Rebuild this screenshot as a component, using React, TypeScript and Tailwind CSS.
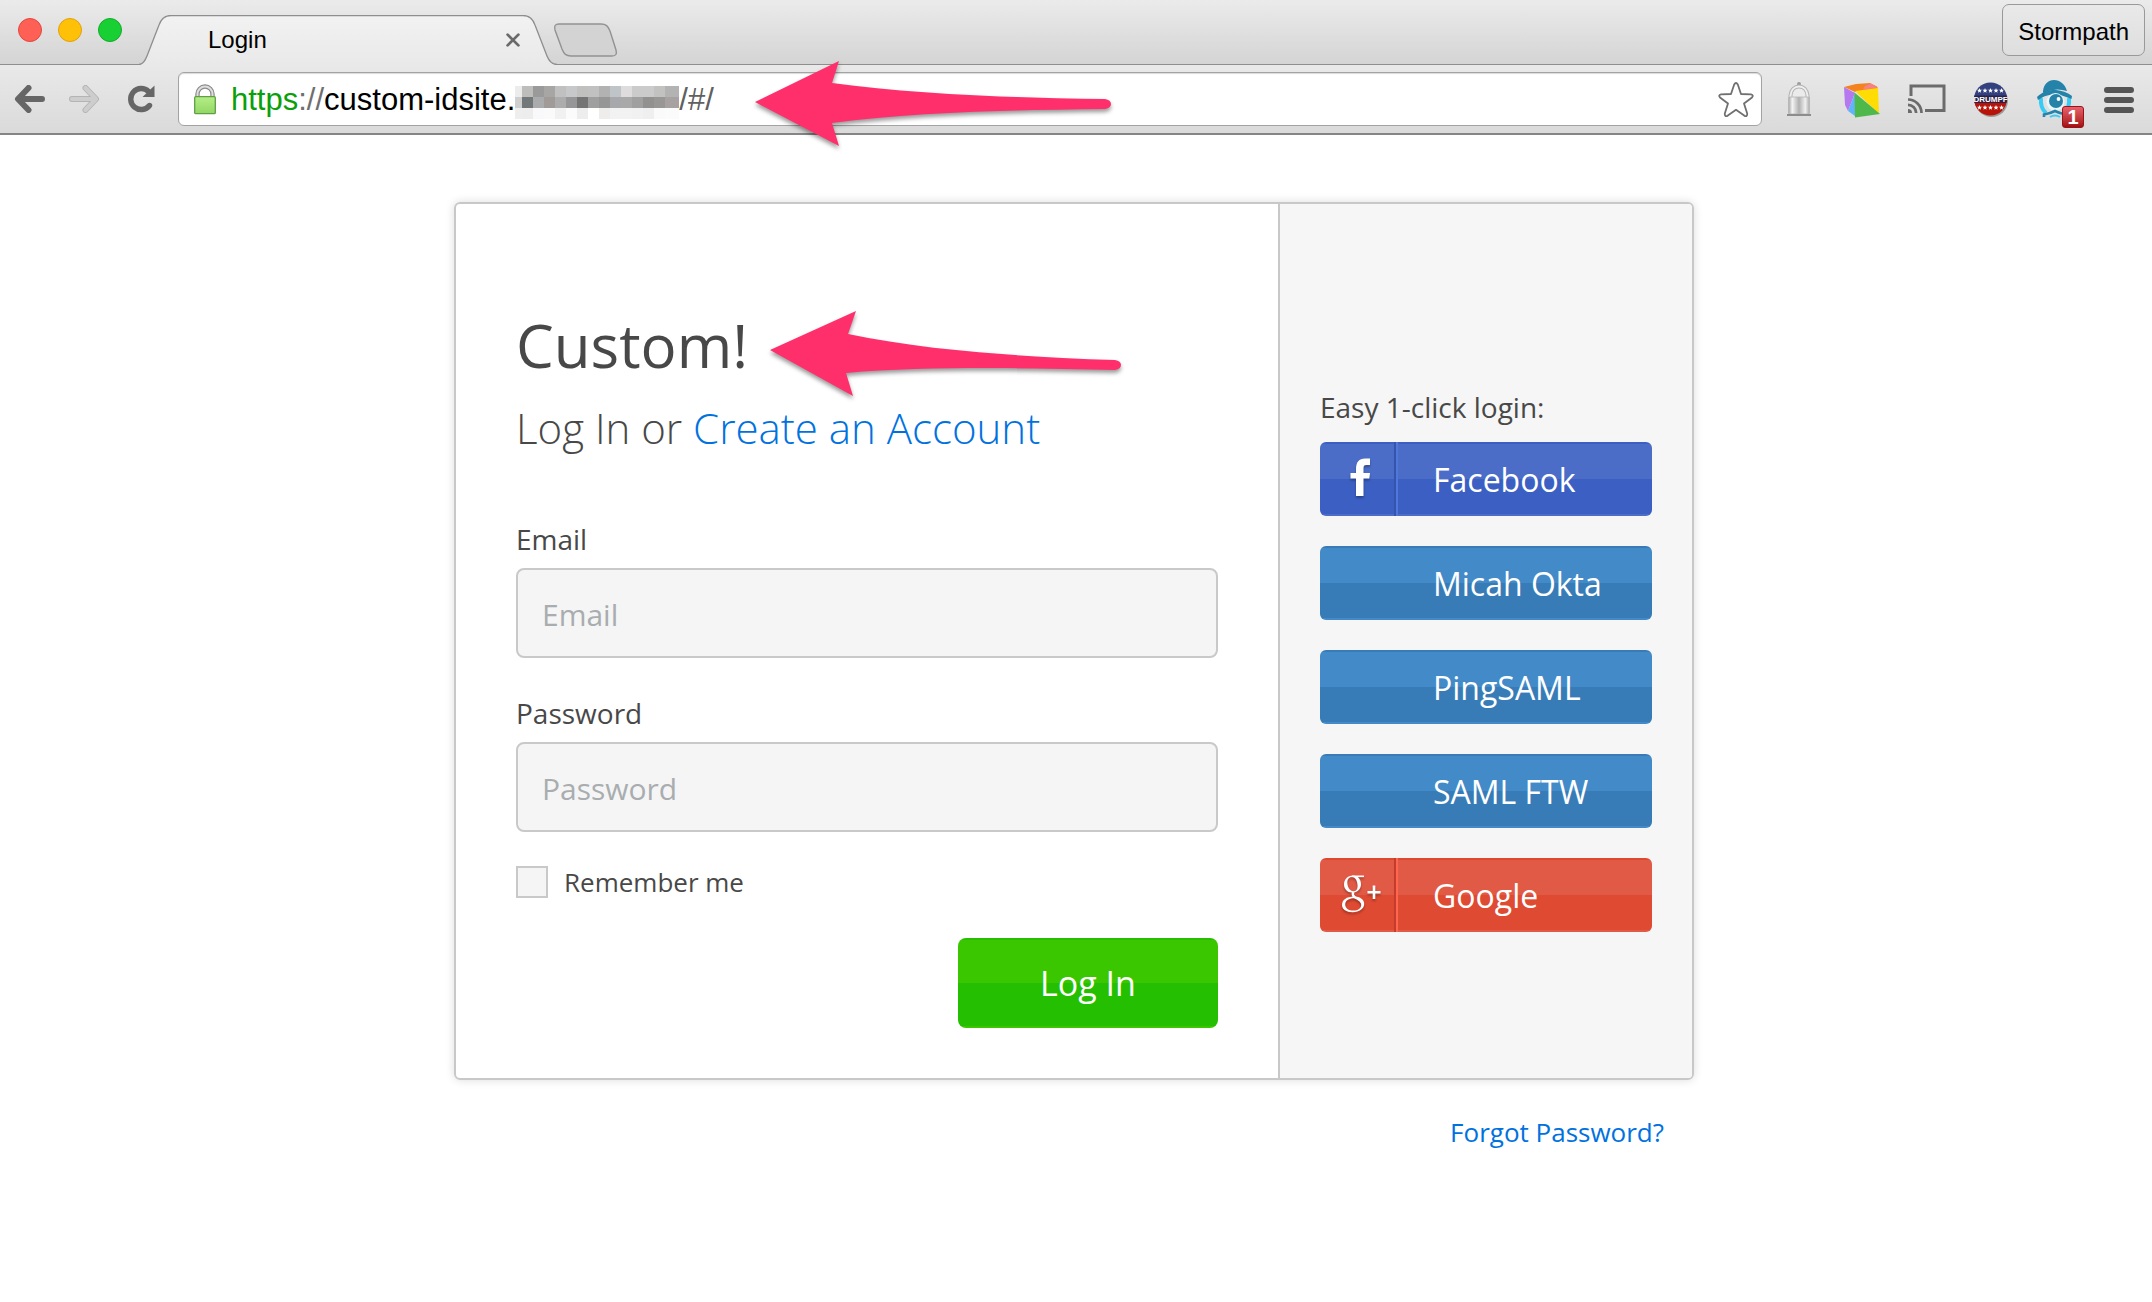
import React from "react";

const MOSAIC: string[][] = [
  ["#ececec", "#bdbdbb", "#999a99", "#a7a6a4", "#c0c0c0", "#c6c8ca", "#c0c0bf", "#c1c1c1", "#b2b2b3", "#bfc4c9", "#dedcdd", "#cbcbcb", "#cbcbcb", "#c2c2c1", "#b3b3b3"],
  ["#cfcfcf", "#727879", "#a9abad", "#a09b99", "#acacad", "#969598", "#747474", "#9f9f9f", "#969696", "#a6a8ac", "#a9a9aa", "#a0a0a1", "#929190", "#999796", "#a7a2a1"],
  ["#eeeeee", "#ededed", "#f9f9fb", "#fafafa", "#f1f1f1", "#fbfbfb", "#ededed", "#ffffff", "#efedeb", "#f2f2f2", "#f2f2f2", "#f1f1f1", "#efefef", "#fafafa", "#fbfbfb"],
];

function Mosaic() {
  return (
    <svg width="164" height="33" viewBox="0 0 164 33" shapeRendering="crispEdges" aria-hidden="true" className="shrink-0">
      {MOSAIC.map((row, r) =>
        row.map((c, i) => (
          <rect key={`${r}-${i}`} x={i === 0 ? 0 : 7 + (i - 1) * 11} y={r * 11} width={i === 0 ? 7 : i === 14 ? 14 : 11} height="11" fill={c} />
        )),
      )}
    </svg>
  );
}

function BrowserTab() {
  return (
    <div className="relative z-10 -mb-px ml-[17px] flex h-[50px] w-[418px] shrink-0 items-center">
      <svg className="absolute inset-0" width="418" height="50" viewBox="0 0 418 50" aria-hidden="true">
        <defs>
          <linearGradient id="tabFill" x1="0" y1="0" x2="0" y2="1">
            <stop offset="0" stopColor="#f2f2f2" />
            <stop offset="1" stopColor="#e9e9e9" />
          </linearGradient>
        </defs>
        <path d="M0 50V49.5C4 49.5 6 46 8 41L20 10C22 4 25 .5 32 .5H384C391 .5 394 4 396 10L408 41C410 46 413 49.500 418 49.500V50Z" fill="url(#tabFill)" />
        <path d="M0 49.500C4 49.500 6 46 8 41L20 10C22 4 25 .5 32 .5H384C391 .5 394 4 396 10L408 41C410 46 413 49.500 418 49.500" fill="none" stroke="#8e8e8e" strokeWidth="1.300" />
      </svg>
      <span className="relative flex-1 pl-[69px] text-[24px] leading-[28px] text-black">Login</span>
      <button type="button" aria-label="Close tab" className="relative mr-[37px] flex h-6 w-[14px] items-center justify-center">
        <svg width="14" height="14" viewBox="0 0 13 13" fill="none" stroke="#6a6a6a" strokeWidth="2.600" strokeLinecap="round">
          <path d="M1.500 1.500l10 10M11.500 1.500l-10 10" />
        </svg>
      </button>
    </div>
  );
}

function LockIcon() {
  return (
    <svg width="24" height="32" viewBox="0 0 24 32" aria-hidden="true" className="shrink-0">
      <defs>
        <linearGradient id="lockBody" x1="0" y1="0" x2="0" y2="1">
          <stop offset="0" stopColor="#b5ee86" />
          <stop offset="1" stopColor="#92d765" />
        </linearGradient>
      </defs>
      <path d="M4.500 13V10a7.500 7.500 0 0 1 15 0v3" fill="none" stroke="#8b8b8b" strokeWidth="4.400" />
      <path d="M4.500 13V10a7.500 7.500 0 0 1 15 0v3" fill="none" stroke="#dedede" strokeWidth="2" />
      <rect x="1.700" y="12.700" width="20.600" height="17" rx="1" fill="url(#lockBody)" stroke="#5f9f45" strokeWidth="1.300" />
    </svg>
  );
}

function BackIcon() {
  return (
    <svg width="32" height="28" viewBox="0 0 32 28" fill="none" stroke="#666666" strokeWidth="6" strokeLinecap="round" strokeLinejoin="round">
      <path d="M28 14H5M14.500 3L4 14l10.500 11" />
    </svg>
  );
}

function ForwardIcon() {
  return (
    <svg width="32" height="28" viewBox="0 0 32 28" fill="none" strokeLinecap="round" strokeLinejoin="round">
      <path d="M4 14h23M17.500 3L28 14 17.500 25" stroke="#b4b4b4" strokeWidth="6" />
      <path d="M4 14h23M17.500 3L28 14 17.500 25" stroke="#cdcdcd" strokeWidth="4.200" />
    </svg>
  );
}

function ReloadIcon() {
  return (
    <svg width="28" height="28" viewBox="0 0 28 28" aria-hidden="true">
      <path d="M21.500 6.500A10.500 10.500 0 1 0 22.500 20.500" fill="none" stroke="#666666" strokeWidth="5.400" strokeLinecap="round" />
      <path d="M27.500 .5V12H15.500Z" fill="#666666" />
    </svg>
  );
}

function GhostLockIcon() {
  return (
    <svg width="28" height="36" viewBox="0 0 28 36" aria-hidden="true">
      <defs>
        <linearGradient id="ghost" x1="0" y1="0" x2="1" y2="0">
          <stop offset="0" stopColor="#a4a4a4" />
          <stop offset=".18" stopColor="#f4f4f4" />
          <stop offset=".5" stopColor="#b0b0b0" />
          <stop offset=".8" stopColor="#f0f0f0" />
          <stop offset="1" stopColor="#ababab" />
        </linearGradient>
      </defs>
      <circle cx="14" cy="3" r="2" fill="#9c9c9c" />
      <path d="M5.500 17V14.500C6 9 9.500 5.500 14 5.500S22 9 22.500 14.500V17" fill="#ebebeb" stroke="#b4b4b4" strokeWidth="4" />
      <path d="M5.500 17V14.500C6 9 9.500 5.500 14 5.500S22 9 22.500 14.500V17" fill="none" stroke="#efefef" strokeWidth="2" />
      <rect x="3.500" y="16" width="21" height="17" rx="1" fill="url(#ghost)" stroke="#b5b5b5" strokeWidth=".8" />
      <path d="M2 34h24" stroke="#8d8d8d" strokeWidth="2" />
    </svg>
  );
}

function CubeIcon() {
  return (
    <svg width="38" height="36" viewBox="0 0 38 36" aria-hidden="true">
      <path d="M1 4L13 1 27 0 34 3.500 35 6 12 9Z" fill="#f58220" />
      <path d="M22 3L28 .5 35 5 20 6.500Z" fill="#f7818a" />
      <path d="M1 4L12 10 5 28 2 22Z" fill="#b678ee" />
      <path d="M12 10L5 28 12 33Z" fill="#62b4fa" />
      <path d="M12 8L35 5 36 31Z" fill="#ffdc04" />
      <path d="M11.500 9.500L37 31 12 34.500Z" fill="#4fb84a" />
    </svg>
  );
}

function CastIcon() {
  return (
    <svg width="40" height="32" viewBox="0 0 40 32" fill="none" stroke="#6b6b6b" aria-hidden="true">
      <path d="M4 13V3H37V27.500H18" strokeWidth="3" />
      <path d="M1 16.500A13.500 13.500 0 0 1 14.500 30M1 21.800A8.200 8.200 0 0 1 9.200 30" strokeWidth="2.700" />
      <path d="M1 30V26A4 4 0 0 1 5 30Z" fill="#6b6b6b" stroke="none" />
    </svg>
  );
}

const STARS = [6, 11.5, 17, 22.5, 28];

function BadgeIcon() {
  return (
    <svg width="36" height="38" viewBox="0 0 36 38" aria-hidden="true">
      <defs>
        <clipPath id="round">
          <circle cx="17.500" cy="18" r="16.500" />
        </clipPath>
      </defs>
      <circle cx="18.500" cy="19.500" r="16.500" fill="#000" opacity=".3" />
      <g clipPath="url(#round)">
        <rect width="36" height="18" fill="#32407f" />
        <rect y="18" width="36" height="20" fill="#b81308" />
        <rect y="14.500" width="36" height="7.500" fill="#2b2347" />
      </g>
      {STARS.map((x) => (
        <g key={x} fill="#fff">
          <path d={`M${x + 0.5} 7l.7 1.700 1.800.1-1.400 1.200.5 1.800-1.600-1-1.600 1 .5-1.800-1.400-1.200 1.800-.1z`} />
          <path d={`M${x + 0.5} 24l.7 1.700 1.800.1-1.400 1.200.5 1.800-1.600-1-1.600 1 .5-1.800-1.400-1.200 1.800-.1z`} />
        </g>
      ))}
      <text x="17.500" y="21" textAnchor="middle" fontFamily="Liberation Sans, sans-serif" fontWeight="700" fontSize="8" fill="#fff">
        DRUMPF
      </text>
    </svg>
  );
}

function DetectiveIcon() {
  return (
    <svg width="38" height="40" viewBox="0 0 38 40" aria-hidden="true">
      <path d="M5 19Q4 29 10 34M33 19Q34 29 28 34" fill="none" stroke="#38ccf5" strokeWidth="4" />
      <path d="M7 12C8 5 12 1 18 1S29 5 31 12Q19 8 7 14Z" fill="#2583a9" />
      <path d="M1 18C7 12 14 10.500 20 11S32 14 36 17L35.500 20C30 18 24 15 17 15.500S7 18 2 21Z" fill="#2583a9" />
      <circle cx="19.500" cy="23" r="9" fill="#e9f6fa" />
      <circle cx="20" cy="22" r="7" fill="#2583a9" />
      <circle cx="22.500" cy="20" r="1.900" fill="#fff" />
      <path d="M8 38V35.500Q14 34.500 19 32 24 34.500 30 35.500V38" fill="none" stroke="#2583a9" strokeWidth="2.600" />
      <path d="M14 38q5-3 10 0" fill="none" stroke="#38ccf5" strokeWidth="2" />
    </svg>
  );
}

function FacebookIcon() {
  return (
    <svg width="24" height="42" viewBox="0 0 24 42" aria-hidden="true" className="drop-shadow-[0_2px_1px_rgba(0,0,0,0.3)]">
      <path d="M7 39V21.500H1.500V16H7V12C7 5 10 1.500 16 1.500H21V8H17.500C15 8 14.500 9 14.500 11.500V16H21L20.300 21.500H14.500V39Z" fill="#fff" />
    </svg>
  );
}

function GooglePlusIcon() {
  return (
    <svg width="42" height="40" viewBox="0 0 42 40" fill="none" stroke="#fff" aria-hidden="true" className="drop-shadow-[0_2px_1px_rgba(0,0,0,0.3)]">
      <path
        fillRule="evenodd"
        stroke="none"
        fill="#fff"
        d="M13 1.500C7.500 1.500 4 5.500 4 10.500 4 15 7.500 18.500 12 18.500 17.500 18.500 21 15 21 10.200 21 5.500 18 1.500 13 1.500ZM12.200 3C15.500 3 17.600 7.500 17.600 12 17.600 15.500 16 17.200 13.400 17.200 9.500 17.200 7.300 12.500 7.300 8.300 7.300 5 9 3 12.200 3Z"
      />
      <path d="M12 2.300H24" strokeWidth="1.600" />
      <path d="M13.500 18Q11.500 21 15 23.200 20.500 26 21.800 28" strokeWidth="2.400" />
      <path
        fillRule="evenodd"
        stroke="none"
        fill="#fff"
        d="M14 22.500C6.500 22.500 2 26 2 31 2 35.500 6.500 38.200 12.500 38.200 19.500 38.200 24.200 34.800 24.200 29.800 24.200 26 20.500 22.500 14 22.500ZM14.500 24.200C18.500 25.500 21.200 28 21.200 31 21.200 34.500 18 36.600 13.500 36.600 8.500 36.600 5.200 34.200 5.200 30.500 5.200 26.500 9 24 14.500 24.200Z"
      />
      <path d="M34 11.500V25M27.500 18.200H40.500" strokeWidth="2.600" />
    </svg>
  );
}

type Provider = { name: string; tone: string; icon?: React.ReactNode; iconTone?: string };

const BLUE =
  "bg-[linear-gradient(to_bottom,#387bb6_0_2px,#428ac8_2px_37px,#387cb7_37px_72px,#428ac8_72px)]";

const PROVIDERS: Provider[] = [
  {
    name: "Facebook",
    tone: "bg-[linear-gradient(to_bottom,#3b5fc2_0_2px,#4b6dc7_2px_37px,#3b5fc3_37px_72px,#4b6dc7_72px)]",
    icon: <FacebookIcon />,
    iconTone: "border-[#3554ae] shadow-[2px_0_0_#5078dc]",
  },
  { name: "Micah Okta", tone: BLUE },
  { name: "PingSAML", tone: BLUE },
  { name: "SAML FTW", tone: BLUE },
  {
    name: "Google",
    tone: "bg-[linear-gradient(to_bottom,#de4830_0_2px,#e15a46_2px_37px,#df4a32_37px_72px,#e15a46_72px)]",
    icon: <GooglePlusIcon />,
    iconTone: "border-[#c43c2b] shadow-[2px_0_0_#ff6650]",
  },
];

function ProviderButton({ name, tone, icon, iconTone }: Provider) {
  return (
    <button type="button" className={`flex h-[74px] w-full items-center rounded-[6px] text-left text-[32px] text-white ${tone}`}>
      {icon ? (
        <span className={`flex h-full w-[76px] items-center justify-center border-r-2 pb-[2px] pl-[8px] ${iconTone}`}>{icon}</span>
      ) : (
        <span className="w-[76px]" />
      )}
      <span className="pt-[2px] pl-[37px] leading-[44px]">{name}</span>
    </button>
  );
}

function Field({ id, label, type }: { id: string; label: string; type: string }) {
  return (
    <div className="flex flex-col gap-[9px]">
      <label htmlFor={id} className="text-[28px] leading-[40px]">
        {label}
      </label>
      <input
        id={id}
        type={type}
        placeholder={label}
        className="h-[90px] w-full rounded-[8px] border-2 border-[#c9c9c9] bg-[#f5f5f5] px-6 pt-[3px] text-[30px] outline-none placeholder:text-[#a9adb0]"
      />
    </div>
  );
}

function Arrow({ className, d }: { className: string; d: string }) {
  return (
    <svg
      width="360"
      height="92"
      viewBox="0 0 360 92"
      aria-hidden="true"
      className={`pointer-events-none absolute z-20 drop-shadow-[0_3px_2px_rgba(0,0,0,0.4)] ${className}`}
    >
      <path d={d} fill="#ff2f6c" />
    </svg>
  );
}

function BrowserChrome() {
  return (
    <header className="border-b-2 border-[#858585] font-['Liberation_Sans',Arial,sans-serif]">
      <div className="flex h-[65px] items-end border-b border-[#8e8e8e] bg-linear-to-b from-[#ebebeb] to-[#d4d4d4]">
        <div className="flex gap-4 self-start pt-[18px] pl-[18px]">
          <button type="button" aria-label="Close window" className="size-6 rounded-full border border-[#e2463f] bg-[#ff6056]" />
          <button type="button" aria-label="Minimize window" className="size-6 rounded-full border border-[#e0a10e] bg-[#ffc008]" />
          <button type="button" aria-label="Zoom window" className="size-6 rounded-full border border-[#12ac28] bg-[#18d034]" />
        </div>
        <BrowserTab />
        <button type="button" aria-label="New tab" className="-ml-[4px] mb-[7px]">
          <svg width="65" height="34" viewBox="0 0 65 34">
            <path d="M6 1H48C53 1 55 3 57 8L63 27C64 31 63 33 59 33H18C13 33 11 31 9 26L2 7C1 3 2 1 6 1Z" fill="#d3d3d3" stroke="#929292" strokeWidth="1.400" />
          </svg>
        </button>
        <button
          type="button"
          className="mr-[7px] mb-[8px] ml-auto h-[52px] rounded-[7px] border border-[#999999] bg-linear-to-b from-[#e9e9e9] to-[#dedede] px-[15px] pt-[3px] text-[24px] text-black"
        >
          Stormpath
        </button>
      </div>
      <div className="flex h-[68px] items-center bg-linear-to-b from-[#e9e9e9] to-[#dadada] pl-[14px]">
        <button type="button" aria-label="Back">
          <BackIcon />
        </button>
        <button type="button" aria-label="Forward" className="ml-[22px]">
          <ForwardIcon />
        </button>
        <button type="button" aria-label="Reload" className="ml-[27px]">
          <ReloadIcon />
        </button>
        <div className="ml-[23px] flex h-[54px] flex-1 items-center rounded-[6px] border border-[#a3a3a3] bg-white pt-px pr-[6px] pl-[14px] text-[31px] leading-[36px] shadow-[inset_0_1px_1px_rgba(0,0,0,0.15)]">
          <LockIcon />
          <span className="ml-[14px] whitespace-nowrap text-black">
            <span className="text-[#0aa00a]">https</span>
            <span className="text-[#6f6f6f]">://</span>custom-idsite.
          </span>
          <div className="pt-[6px]">
            <Mosaic />
          </div>
          <span className="text-[#606060]">/#/</span>
          <button type="button" aria-label="Bookmark this page" className="ml-auto">
            <svg width="38" height="38" viewBox="0 0 38 38" fill="none" stroke="#707070" strokeWidth="1.800" strokeLinejoin="round">
              <path d="M17.200 3.500Q19 .5 20.800 3.500L24 13 34 13.300Q37 14 35 16.500L27 22.500 30.200 32.500Q30.500 35.800 27.500 34.800L19 28.800 10.500 34.800Q7.500 35.800 7.800 32.500L11 22.500 3 16.500Q1 14 4 13.300L14 13Z" />
            </svg>
          </button>
        </div>
        <div className="flex items-center pr-[18px] pl-[23px]">
          <button type="button" aria-label="Lock extension">
            <GhostLockIcon />
          </button>
          <button type="button" aria-label="Cube extension" className="ml-[30px] pt-[3px]">
            <CubeIcon />
          </button>
          <button type="button" aria-label="Cast" className="ml-[26px]">
            <CastIcon />
          </button>
          <button type="button" aria-label="Drumpf extension" className="ml-[26px] pt-[2px]">
            <BadgeIcon />
          </button>
          <button type="button" aria-label="Privacy extension" className="relative ml-[27px]">
            <DetectiveIcon />
            <span className="absolute -right-[10px] -bottom-[9px] flex h-[22px] w-[22px] items-center justify-center rounded-[3px] border border-[#96141a] bg-linear-to-b from-[#e8606a] to-[#a50c12] text-[20px] leading-[20px] font-bold text-white">
              1
            </span>
          </button>
          <button type="button" aria-label="Menu" className="ml-[30px] pt-px">
            <svg width="30" height="26" viewBox="0 0 30 26" stroke="#555555" strokeWidth="6" strokeLinecap="round">
              <path d="M3 3H27M3 13H27M3 23H27" />
            </svg>
          </button>
        </div>
      </div>
    </header>
  );
}

export default function App() {
  return (
    <div className="relative min-h-screen bg-white font-['Open_Sans',sans-serif] text-[#484848]">
      <BrowserChrome />
      <main className="pt-[67px] pr-1 pb-16">
        <div className="mx-auto w-full max-w-[1240px]">
          <div className="flex rounded-[6px] border-2 border-[#c8c8c8] shadow-[0_0_10px_rgba(0,0,0,0.14)]">
            <form className="flex-1 px-[60px] pt-[101px] pb-[50px]" onSubmit={(e) => e.preventDefault()}>
              <div className="relative">
                <h1 className="text-[60px] leading-[80px]">Custom!</h1>
                <Arrow
                  className="top-0 left-[252px]"
                  d="M2 45L88 6 80 29C160 46 260 52 347 55Q353 56 353 60T347 65C260 63 160 61 78 68L85 91Z"
                />
              </div>
              <p className="mt-[15px] text-[42px] leading-[56px] font-light">
                Log In or{" "}
                <a href="#register" className="text-[#0072e0]">
                  Create an Account
                </a>
              </p>
              <div className="mt-[63px] flex flex-col gap-[35px]">
                <Field id="email" label="Email" type="email" />
                <Field id="password" label="Password" type="password" />
              </div>
              <div className="mt-[34px] flex items-center gap-4">
                <input id="remember" type="checkbox" className="size-8 appearance-none border-2 border-[#c9c9c9] bg-[#f5f5f5] checked:bg-[#c9c9c9]" />
                <label htmlFor="remember" className="text-[26px] leading-[32px]">
                  Remember me
                </label>
              </div>
              <button
                type="submit"
                className="mt-[40px] ml-auto block h-[90px] w-[260px] rounded-[8px] bg-[linear-gradient(to_bottom,#26bf00_0_2px,#3bc700_2px_45px,#24bf00_45px_88px,#3bc700_88px)] text-[34px] text-white"
              >
                Log In
              </button>
            </form>
            <aside className="w-[414px] rounded-r-[4px] border-l-2 border-[#c8c8c8] bg-[#f6f6f6] px-[40px] pt-[183px]">
              <p className="text-[28px] leading-[40px]">Easy 1-click login:</p>
              <div className="mt-[15px] flex flex-col gap-[30px]">
                {PROVIDERS.map((p) => (
                  <ProviderButton key={p.name} {...p} />
                ))}
              </div>
            </aside>
          </div>
          <div className="mt-[34px] flex justify-end pr-[30px]">
            <a href="#forgot" className="text-[26px] leading-[36px] text-[#0072e0]">
              Forgot Password?
            </a>
          </div>
        </div>
      </main>
      <Arrow
        className="top-[59px] left-[753px]"
        d="M2 43L86 2 79 24C160 35 260 39 352 40Q358 41 358 45T352 50C260 51 160 53 79 64L86 87Z"
      />
    </div>
  );
}
